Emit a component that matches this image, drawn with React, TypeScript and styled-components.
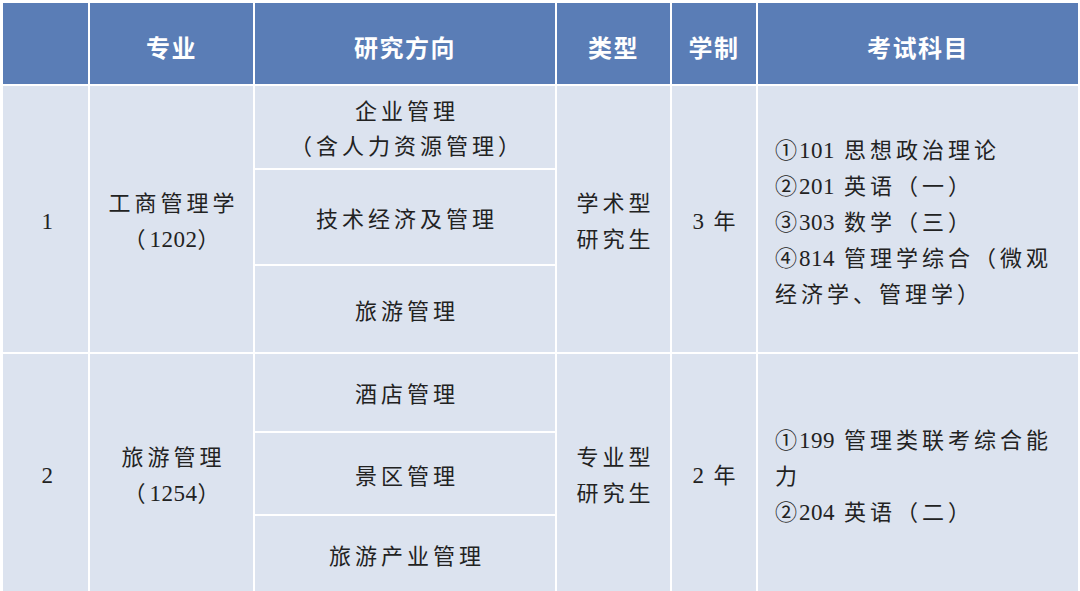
import React from 'react';
import styled, { createGlobalStyle } from 'styled-components';

const GlobalStyle = createGlobalStyle`
  html, body {
    margin: 0;
    padding: 0;
    background: #ffffff;
  }
  body {
    font-family: "Liberation Serif", "Noto Sans CJK SC", serif;
  }
`;

const Table = styled.div`
  display: grid;
  grid-template-columns: 85px 163px 300px 113px 84px 320px;
  grid-template-rows: 81px 82px 94px 86px 77px 81px 75px;
  gap: 2px;
  width: 1080px;
  height: 591px;
  padding: 3px 2px 0 3px;
  box-sizing: border-box;
  background: #ffffff;
  overflow: hidden;
`;

const HeadCell = styled.div`
  display: flex;
  align-items: center;
  justify-content: center;
  padding-top: 6px;
  background: #5a7db6;
  color: #ffffff;
  font-family: "Noto Sans CJK SC", sans-serif;
  font-weight: 700;
  font-size: 24px;
  letter-spacing: 1.5px;
`;

const Cell = styled.div<{ $span?: number; $left?: boolean }>`
  grid-row: span ${({ $span }) => $span ?? 1};
  display: flex;
  flex-direction: column;
  justify-content: center;
  align-items: ${({ $left }) => ($left ? 'flex-start' : 'center')};
  padding: ${({ $left }) => ($left ? '2px 0 0 17px' : '0 0 0 4px')};
  background: #dce3ef;
  color: #222222;
  font-family: "Noto Sans CJK SC", serif;
  font-size: 22px;
  letter-spacing: 4px;
`;

const Line = styled.div<{ $tight?: boolean }>`
  white-space: nowrap;
  line-height: ${({ $tight }) => ($tight ? '35px' : '36px')};
`;

const Digits = styled.span`
  font-family: "Liberation Serif", serif;
  font-size: 23px;
  letter-spacing: 0.5px;
  line-height: 0;
`;

const Mark = styled.span`
  letter-spacing: 2px;
  line-height: 0;
`;

type Group = {
  index: string;
  major: React.ReactNode[];
  directions: { lines: React.ReactNode[] }[];
  kind: string[];
  years: React.ReactNode;
  exams: React.ReactNode[];
};

const groups: Group[] = [
  {
    index: '1',
    major: ['工商管理学', <>（<Digits>1202</Digits>）</>],
    directions: [
      { lines: ['企业管理', '（含人力资源管理）'] },
      { lines: ['技术经济及管理'] },
      { lines: ['旅游管理'] },
    ],
    kind: ['学术型', '研究生'],
    years: <><Digits>3</Digits> 年</>,
    exams: [
      <><Mark>①</Mark><Digits>101</Digits> 思想政治理论</>,
      <><Mark>②</Mark><Digits>201</Digits> 英语（一）</>,
      <><Mark>③</Mark><Digits>303</Digits> 数学（三）</>,
      <><Mark>④</Mark><Digits>814</Digits> 管理学综合（微观</>,
      <>经济学、管理学）</>,
    ],
  },
  {
    index: '2',
    major: ['旅游管理', <>（<Digits>1254</Digits>）</>],
    directions: [
      { lines: ['酒店管理'] },
      { lines: ['景区管理'] },
      { lines: ['旅游产业管理'] },
    ],
    kind: ['专业型', '研究生'],
    years: <><Digits>2</Digits> 年</>,
    exams: [
      <><Mark>①</Mark><Digits>199</Digits> 管理类联考综合能</>,
      <>力</>,
      <><Mark>②</Mark><Digits>204</Digits> 英语（二）</>,
    ],
  },
];

const headers = ['', '专业', '研究方向', '类型', '学制', '考试科目'];

const App: React.FC = () => (
  <>
    <GlobalStyle />
    <Table>
      {headers.map((h, i) => (
        <HeadCell key={i}>{h}</HeadCell>
      ))}
      {groups.map((g) => (
        <React.Fragment key={g.index}>
          <Cell $span={3}>
            <Line><Digits>{g.index}</Digits></Line>
          </Cell>
          <Cell $span={3}>
            {g.major.map((m, i) => (
              <Line key={i}>{m}</Line>
            ))}
          </Cell>
          <Cell>
            {g.directions[0].lines.map((l, i) => (
              <Line key={i} $tight>{l}</Line>
            ))}
          </Cell>
          <Cell $span={3}>
            {g.kind.map((k) => (
              <Line key={k}>{k}</Line>
            ))}
          </Cell>
          <Cell $span={3}>
            <Line>{g.years}</Line>
          </Cell>
          <Cell $span={3} $left>
            {g.exams.map((e, i) => (
              <Line key={i}>{e}</Line>
            ))}
          </Cell>
          {g.directions.slice(1).map((d, i) => (
            <Cell key={i}>
              {d.lines.map((l, j) => (
                <Line key={j}>{l}</Line>
              ))}
            </Cell>
          ))}
        </React.Fragment>
      ))}
    </Table>
  </>
);

export default App;
